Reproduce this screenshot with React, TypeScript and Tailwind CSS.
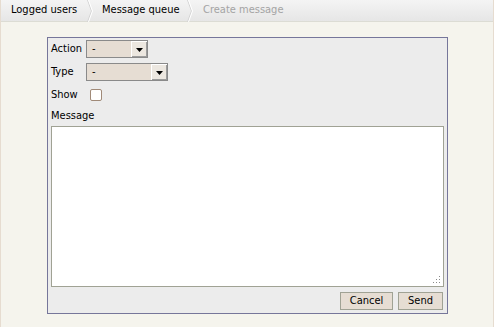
function Chevron() {
  return (
    <svg width="6" height="22" viewBox="0 0 6 22" className="shrink-0">
      <path d="M0.5 0 L4.5 11 L0.5 22" fill="none" stroke="#d4d4d4" strokeWidth="1" />
      <path d="M1.5 0 L5.5 11 L1.5 22" fill="none" stroke="#ffffff" strokeWidth="1" />
    </svg>
  );
}

function Select({ width }: { width: string }) {
  return (
    <div className={`flex h-[18px] ${width} items-stretch border border-[#8a8a8a] bg-[#e6ddd3]`}>
      <span className="flex-1 pl-[5px] leading-[16px]">-</span>
      <span className="flex w-[16px] items-center justify-center border-l border-t border-l-white border-t-white bg-[#ece7e0] shadow-[inset_-1px_-1px_0_#9c9c9c]">
        <svg width="7" height="4" viewBox="0 0 7 4">
          <path d="M0 0 H7 L3.5 4 Z" fill="#000" />
        </svg>
      </span>
    </div>
  );
}

export default function App() {
  return (
    <div
      className="h-[327px] w-[494px] border-x border-[#e6dcd0] bg-[#f5f4ed] text-[11px] text-black"
      style={{ fontFamily: "'DejaVu Sans Condensed', 'DejaVu Sans', Verdana, sans-serif", fontStretch: "condensed" }}
    >
      {/* Breadcrumb */}
      <div className="flex h-[22px] items-center whitespace-nowrap border-b border-[#dcdcd4] bg-gradient-to-b from-[#f4f4f4] to-[#e6e6e6]">
        <span className="w-[86px] shrink-0 pl-[10px]">Logged users</span>
        <Chevron />
        <span className="w-[94px] shrink-0 pl-[9px]">Message queue</span>
        <Chevron />
        <span className="pl-[10px] text-[#a4a4a4]">Create message</span>
      </div>

      {/* Form panel */}
      <div className="ml-[46px] mt-[15px] w-[401px] border border-[#76769a] bg-[#ececec] px-[3px] pt-[2px] pb-[3px]">
        <div className="flex items-center gap-[2px]">
          <span className="w-[33px]">Action</span>
          <Select width="w-[62px]" />
        </div>
        <div className="mt-[5px] flex items-center gap-[2px]">
          <span className="w-[33px]">Type</span>
          <Select width="w-[82px]" />
        </div>
        <div className="mt-[6px] flex items-center">
          <span className="w-[39px]">Show</span>
          <span className="h-[12px] w-[12px] rounded-[2px] border border-[#a08a78] bg-white" />
        </div>
        <div className="mt-[4px]">Message</div>
        <div className="relative mt-[2px] h-[161px] w-[393px] border border-[#a0a294] bg-white">
          <svg width="9" height="9" viewBox="0 0 9 9" className="absolute bottom-[2px] right-[2px]">
            <g fill="#8a8a8a">
              <rect x="7" y="1" width="1" height="1" />
              <rect x="4" y="4" width="1" height="1" />
              <rect x="7" y="4" width="1" height="1" />
              <rect x="1" y="7" width="1" height="1" />
              <rect x="4" y="7" width="1" height="1" />
              <rect x="7" y="7" width="1" height="1" />
            </g>
          </svg>
        </div>
        <div className="mt-[5px] flex justify-end gap-[5px] pr-[1px]">
          <button className="h-[18px] w-[53px] border border-[#a0a294] bg-[#e6ddd3] leading-[16px]">Cancel</button>
          <button className="h-[18px] w-[45px] border border-[#a0a294] bg-[#e6ddd3] leading-[16px]">Send</button>
        </div>
      </div>
    </div>
  );
}
